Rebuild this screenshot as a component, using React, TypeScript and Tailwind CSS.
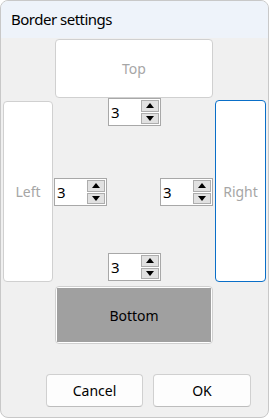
import { useState } from 'react';

function Arrow({ up }: { up: boolean }) {
  return (
    <svg width="8" height="5" viewBox="0 0 8 5" className="block">
      {up ? <path d="M0 5 L4 0 L8 5 Z" fill="#000" /> : <path d="M0 0 L8 0 L4 5 Z" fill="#000" />}
    </svg>
  );
}

function SpinBox({ value, onChange }: { value: number; onChange: (v: number) => void }) {
  return (
    <div className="w-[53px] h-[28px] bg-white border border-[#a8a8a8] flex items-stretch">
      <span className="flex-1 pl-[2px] text-[15px] leading-[26px] text-black">{value}</span>
      <div className="w-[19px] pr-[1px] py-[1px] flex flex-col gap-[1px]">
        <button
          onClick={() => onChange(value + 1)}
          className="flex-1 bg-[#e1e1e1] border border-[#adadad] flex items-center justify-center"
        >
          <Arrow up />
        </button>
        <button
          onClick={() => onChange(Math.max(0, value - 1))}
          className="flex-1 bg-[#e1e1e1] border border-[#adadad] flex items-center justify-center"
        >
          <Arrow up={false} />
        </button>
      </div>
    </div>
  );
}

export default function App() {
  const [top, setTop] = useState(3);
  const [left, setLeft] = useState(3);
  const [right, setRight] = useState(3);
  const [bottom, setBottom] = useState(3);

  return (
    <div
      className="w-[269px] h-[418px] rounded-[8px] border border-[#c8c8c8] bg-[#f0f0f0] overflow-hidden flex flex-col text-black"
      style={{ fontFamily: '"Noto Sans", "Open Sans", sans-serif' }}
    >
      <div className="h-[37px] shrink-0 bg-[#eef3fa] pl-[10px] flex items-center text-[15px] tracking-[-0.5px]">
        Border settings
      </div>

      <div className="flex gap-[2px] px-[2px] pt-[1px]">
        <div className="w-[50px] mt-[62px] h-[181px] bg-white border border-[#d0d0d0] rounded-[4px] flex items-center justify-center text-[14px] text-[#a6a6a6]">
          Left
        </div>

        <div className="w-[158px] flex flex-col">
          <div className="h-[59px] bg-white border border-[#d0d0d0] rounded-[4px] flex items-center justify-center text-[14px] text-[#a6a6a6]">
            Top
          </div>
          <div className="flex justify-center pl-[1px]">
            <SpinBox value={top} onChange={setTop} />
          </div>
          <div className="flex justify-between mt-[52px]">
            <div className="-ml-[1px]">
              <SpinBox value={left} onChange={setLeft} />
            </div>
            <div>
              <SpinBox value={right} onChange={setRight} />
            </div>
          </div>
          <div className="flex justify-center pl-[1px] mt-[47px]">
            <SpinBox value={bottom} onChange={setBottom} />
          </div>
          <div className="mt-[5px] h-[58px] border border-[#d0d0d0] rounded-[4px] bg-white p-[1px]">
            <div className="h-full bg-[#a0a0a0] flex items-center justify-center text-[14px] text-black">
              Bottom
            </div>
          </div>
        </div>

        <div className="w-[51px] mt-[61px] h-[182px] bg-white border border-[#0a6fc8] rounded-[4px] flex items-center justify-center text-[14px] text-[#a6a6a6]">
          Right
        </div>
      </div>

      <div className="mt-auto flex justify-end gap-[10px] pr-[17px] pb-[10px]">
        <button className="w-[97px] h-[33px] bg-[#fdfdfd] border border-[#d0d0d0] border-b-[#bdbdbd] rounded-[4px] text-[14px]">
          Cancel
        </button>
        <button className="w-[98px] h-[33px] bg-[#fdfdfd] border border-[#d0d0d0] border-b-[#bdbdbd] rounded-[4px] text-[14px]">
          OK
        </button>
      </div>
    </div>
  );
}
